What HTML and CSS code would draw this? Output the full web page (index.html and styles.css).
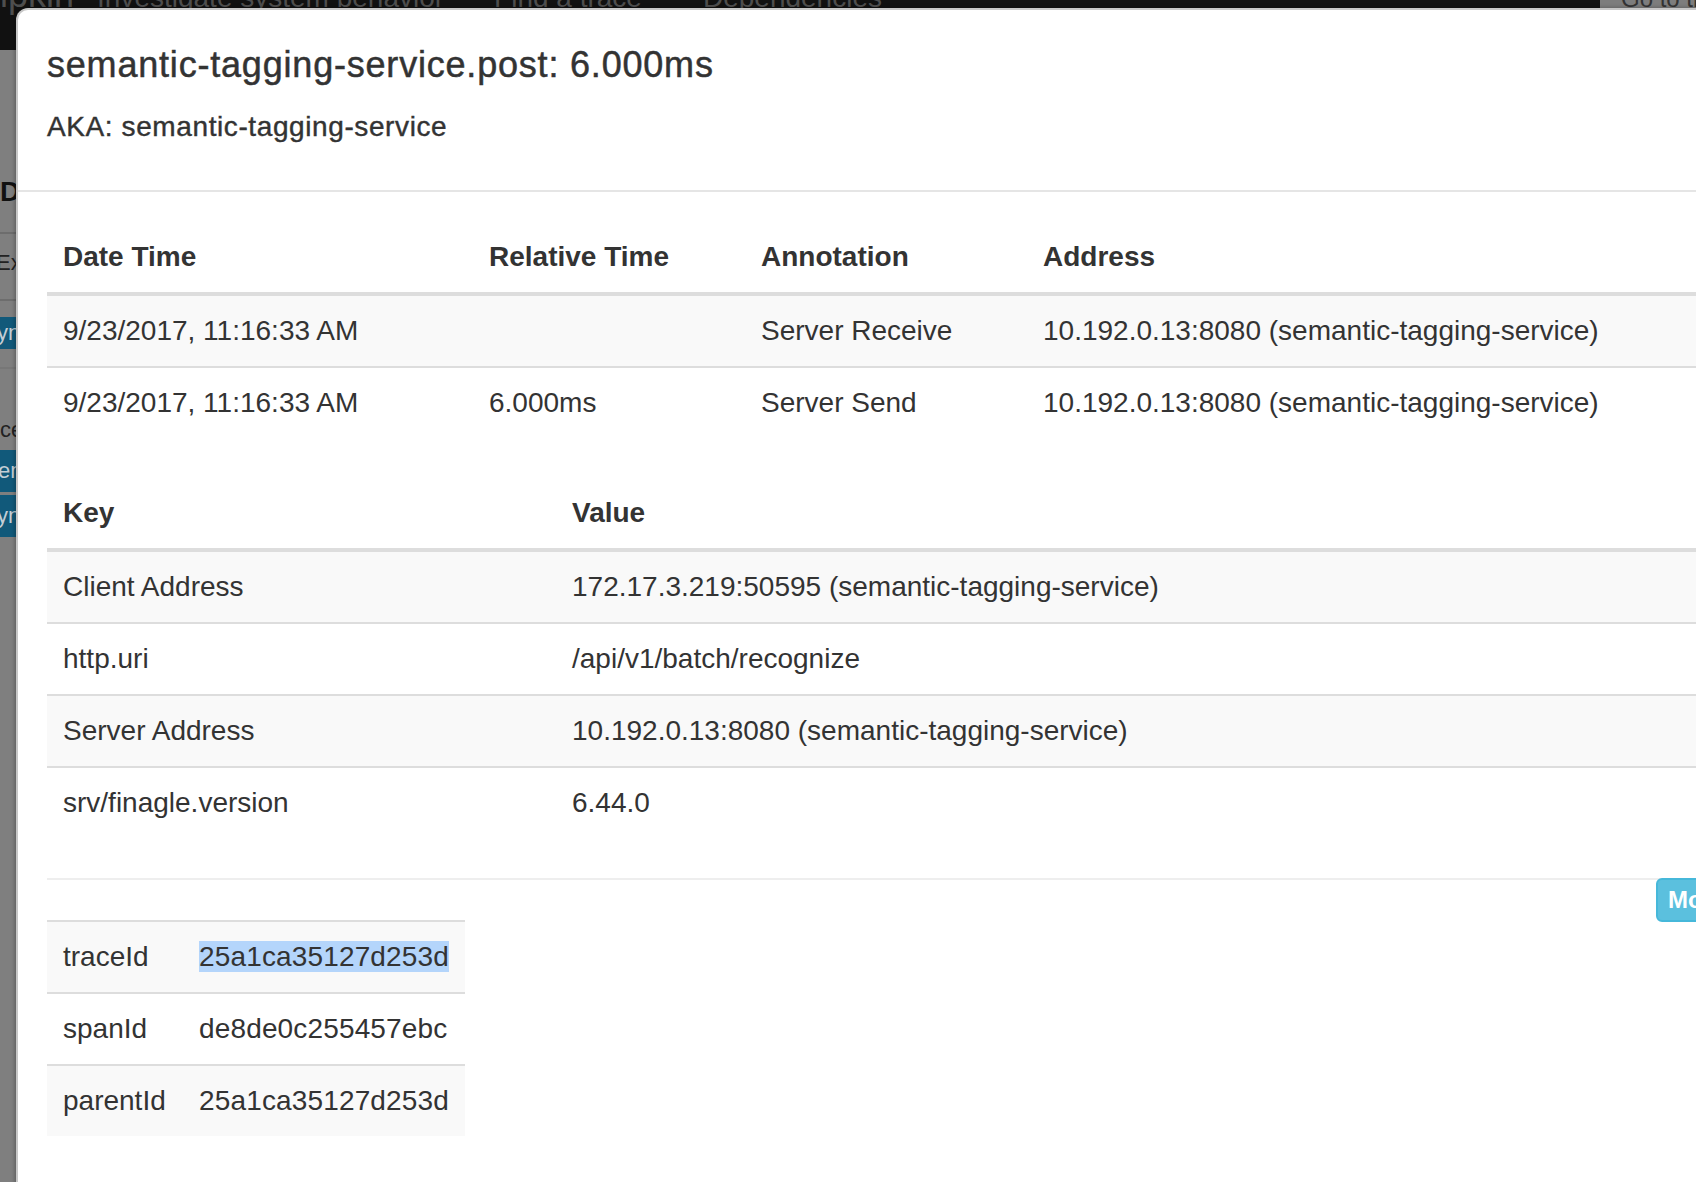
FILE: index.html
```html
<!DOCTYPE html>
<html lang="en">
<head>
<meta charset="utf-8">
<title>Span detail</title>
<link rel="stylesheet" href="styles.css">
</head>
<body>
  <div class="page">
    <nav class="navbar">
      <span class="brand">Zipkin</span>
      <span class="nav-item nav-investigate">Investigate system behavior</span>
      <span class="nav-item nav-find">Find a trace</span>
      <span class="nav-item nav-deps">Dependencies</span>
      <span class="goto">Go to trace</span>
    </nav>
    <div class="strip">
      <div class="strip-heading">D</div>
      <div class="strip-rule strip-rule-1"></div>
      <div class="strip-text strip-ex">Ex</div>
      <div class="strip-rule strip-rule-2"></div>
      <div class="strip-label strip-label-1"><span>yna</span></div>
      <div class="strip-rule strip-rule-3"></div>
      <div class="strip-text strip-ce">ce</div>
      <div class="strip-label strip-label-2"><span>em</span></div>
      <div class="strip-label strip-label-3"><span>yn</span></div>
    </div>
  </div>

  <div class="modal">
    <div class="modal-header">
      <h4 class="modal-title">semantic-tagging-service.post: 6.000ms</h4>
      <h5 class="modal-aka">AKA: semantic-tagging-service</h5>
    </div>
    <div class="modal-body">
      <table class="table table-annotations">
        <colgroup>
          <col class="c-date"><col class="c-rel"><col class="c-ann"><col>
        </colgroup>
        <thead>
          <tr><th>Date Time</th><th>Relative Time</th><th>Annotation</th><th>Address</th></tr>
        </thead>
        <tbody>
          <tr><td>9/23/2017, 11:16:33 AM</td><td></td><td>Server Receive</td><td>10.192.0.13:8080 (semantic-tagging-service)</td></tr>
          <tr><td>9/23/2017, 11:16:33 AM</td><td>6.000ms</td><td>Server Send</td><td>10.192.0.13:8080 (semantic-tagging-service)</td></tr>
        </tbody>
      </table>

      <table class="table table-tags">
        <colgroup>
          <col class="c-key"><col>
        </colgroup>
        <thead>
          <tr><th>Key</th><th>Value</th></tr>
        </thead>
        <tbody>
          <tr><td>Client Address</td><td>172.17.3.219:50595 (semantic-tagging-service)</td></tr>
          <tr><td>http.uri</td><td>/api/v1/batch/recognize</td></tr>
          <tr><td>Server Address</td><td>10.192.0.13:8080 (semantic-tagging-service)</td></tr>
          <tr><td>srv/finagle.version</td><td>6.44.0</td></tr>
        </tbody>
      </table>

      <div class="ids-section">
        <table class="table table-ids">
          <tbody>
            <tr><td class="id-key">traceId</td><td class="id-val"><span class="selected">25a1ca35127d253d</span></td></tr>
            <tr><td class="id-key">spanId</td><td class="id-val">de8de0c255457ebc</td></tr>
            <tr><td class="id-key">parentId</td><td class="id-val">25a1ca35127d253d</td></tr>
          </tbody>
        </table>
        <button class="btn-info" type="button">More Info</button>
      </div>
    </div>
  </div>
</body>
</html>
```

FILE: styles.css
```css
html, body {
  margin: 0;
  padding: 0;
  overflow: hidden;
}

body {
  width: 1696px;
  height: 1182px;
  position: relative;
  background: #7f7f7f;
  font-family: "Liberation Sans", Arial, Helvetica, sans-serif;
  color: #333;
}

/* ---------- dimmed page behind the modal ---------- */
.page {
  width: 1696px;
  height: 1182px;
  display: flex;
  flex-direction: column;
}

.navbar {
  height: 50px;
  flex: none;
  background: #111;
  color: #4e4e4e;
  display: flex;
  align-items: flex-start;
  overflow: hidden;
  white-space: nowrap;
}

.brand {
  font-size: 36px;
  line-height: 40px;
  margin: -25px 0 0 -22px;
}

.nav-item {
  font-size: 28px;
  line-height: 40px;
  margin-top: -22px;
}

.nav-investigate { margin-left: 23px; }
.nav-find { margin-left: 50px; }
.nav-deps { margin-left: 61px; }

.goto {
  margin-left: auto;
  width: 96px;
  height: 40px;
  box-sizing: border-box;
  margin-top: -30px;
  padding: 17px 0 0 21px;
  background: #7d7d7d;
  border-bottom: 1px solid #8a8a8a;
  color: #333;
  font-size: 24px;
  line-height: 24px;
  overflow: hidden;
}

.strip {
  width: 17px;
  overflow: hidden;
  display: flex;
  flex-direction: column;
  white-space: nowrap;
}

.strip-heading {
  margin-top: 122px;
  font-size: 28px;
  line-height: 40px;
  font-weight: bold;
  color: #111;
}

.strip-rule {
  height: 2px;
  background: #6d6d6d;
}
.strip-rule-1 { margin-top: 20px; }
.strip-rule-2 { margin-top: 21px; }
.strip-rule-3 { margin-top: 18px; background: #777; }

.strip-text {
  font-size: 22px;
  line-height: 30px;
  color: #222;
}
.strip-ex { margin: 14px 0 0 -4px; }
.strip-ce { margin: 46px 0 0 0; }

.strip-label {
  background: #11597a;
  color: #c3ced5;
  font-size: 22px;
  display: flex;
  align-items: center;
}
.strip-label span { flex: none; }
.strip-label-1 { margin-top: 16px; height: 32px; }
.strip-label-1 span { margin-left: -3px; }
.strip-label-2 { margin-top: 5px; height: 42px; }
.strip-label-2 span { margin-left: -2px; }
.strip-label-3 { margin-top: 3px; height: 42px; }
.strip-label-3 span { margin-left: -3px; }

/* ---------- modal ---------- */
.modal {
  position: absolute;
  left: 16px;
  top: 8px;
  width: 1804px;
  height: 1300px;
  box-sizing: border-box;
  background: #fff;
  border: 2px solid rgba(0, 0, 0, 0.22);
  border-radius: 12px;
  box-shadow: -1px 0 4px rgba(0, 0, 0, 0.3);
}

.modal-header {
  padding: 30px 30px 43px 29px;
  border-bottom: 2px solid #e5e5e5;
}

.modal-title {
  margin: 0;
  font-size: 36px;
  line-height: 50px;
  font-weight: normal;
  letter-spacing: 0.8px;
  -webkit-text-stroke: 0.5px #333;
  color: #333;
}

.modal-aka {
  margin: 17px 0 0;
  font-size: 28px;
  line-height: 40px;
  font-weight: normal;
  letter-spacing: 0.6px;
  -webkit-text-stroke: 0.4px #333;
  color: #333;
}

.modal-body {
  padding: 30px 30px 30px 29px;
}

/* ---------- tables ---------- */
.table {
  border-collapse: separate;
  border-spacing: 0;
  font-size: 28px;
  line-height: 40px;
  color: #333;
}

.table th,
.table td {
  padding: 15px 16px;
  text-align: left;
  vertical-align: top;
  white-space: nowrap;
}

.table th {
  font-weight: bold;
  border-bottom: 4px solid #ddd;
}

.table td {
  border-top: 2px solid #ddd;
}

.table thead + tbody tr:first-child td {
  border-top: 0;
}

.table tbody tr:nth-child(odd) td {
  background: #f9f9f9;
}

.table-annotations,
.table-tags {
  width: 100%;
  table-layout: fixed;
  margin-bottom: 40px;
}

.c-date { width: 426px; }
.c-rel { width: 272px; }
.c-ann { width: 282px; }
.c-key { width: 509px; }

.ids-section {
  border-top: 2px solid #eee;
  display: flex;
  justify-content: space-between;
  align-items: flex-start;
}

.table-ids {
  margin-top: 40px;
}

.id-key {
  width: 104px;
}

.id-val {
  letter-spacing: 0.15px;
}

.selected {
  background: #b4d5fb;
}

.btn-info {
  margin-top: -2px;
  padding: 2px 10px;
  font-family: inherit;
  font-size: 24px;
  line-height: 36px;
  font-weight: bold;
  color: #fff;
  background: #5bc0de;
  border: 2px solid #46b8da;
  border-radius: 6px;
  white-space: nowrap;
}
```
